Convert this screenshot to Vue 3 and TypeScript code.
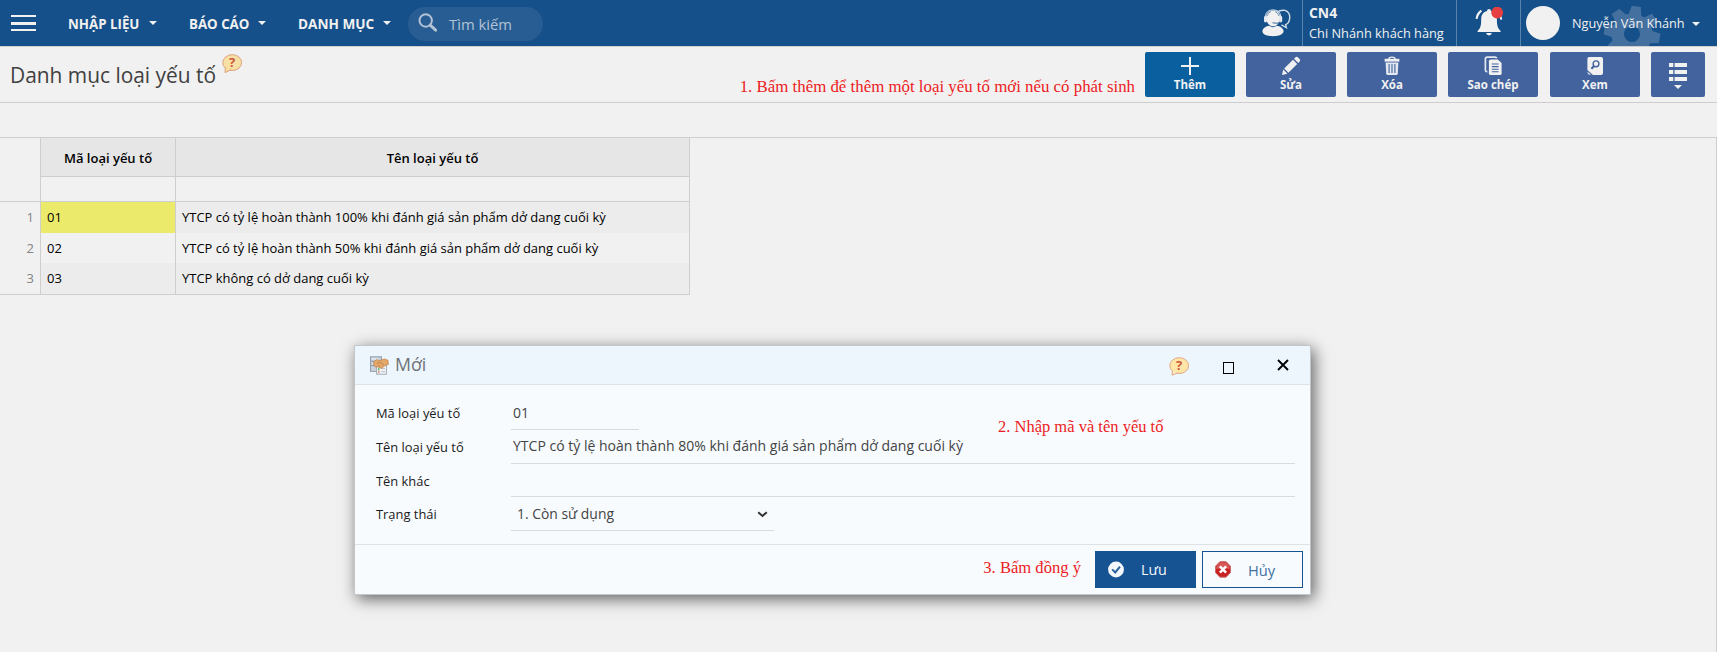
<script setup lang="ts">
interface Menu { label: string; cls: string }
interface Row { n: number; code: string; name: string }

const menus: Menu[] = [
  { label: 'NHẬP LIỆU', cls: 'menu-input' },
  { label: 'BÁO CÁO', cls: 'menu-report' },
  { label: 'DANH MỤC', cls: 'menu-list' },
]

const rows: Row[] = [
  { n: 1, code: '01', name: 'YTCP có tỷ lệ hoàn thành 100% khi đánh giá sản phẩm dở dang cuối kỳ' },
  { n: 2, code: '02', name: 'YTCP có tỷ lệ hoàn thành 50% khi đánh giá sản phẩm dở dang cuối kỳ' },
  { n: 3, code: '03', name: 'YTCP không có dở dang cuối kỳ' },
]

const gearTeeth = [0, 45, 90, 135, 180, 225, 270, 315]
</script>

<template>
  <div class="page">
    <header class="topbar">
      <div class="burger"><i></i><i></i><i></i></div>
      <nav class="menus">
        <div v-for="m in menus" :key="m.label" class="menu" :class="m.cls">
          <span>{{ m.label }}</span><i class="caret"></i>
        </div>
      </nav>
      <div class="search">
        <svg width="20" height="20" viewBox="0 0 20 20">
          <circle cx="7.7" cy="7.5" r="6.2" fill="none" stroke="#b3c3d5" stroke-width="2" />
          <path d="M12.2 12.2 L17.6 17.2" stroke="#b3c3d5" stroke-width="3" stroke-linecap="round" />
        </svg>
        <span>Tìm kiếm</span>
      </div>
      <div class="support">
        <svg width="30" height="30" viewBox="0 0 30 30">
          <path d="M15 3 Q19 .6 23 1.4 Q28 3 27.7 9 Q27.3 14.5 23.6 15.6 L24.4 18.6 L19.4 15.8" fill="none" stroke="#cfdbe7" stroke-width="1.4" />
          <path d="M4.2 9.5 C3.6 4 7 1.6 11 1.6 C15.2 1.6 18.6 4 18 9.5 C17.8 13.6 15 17.3 11 17.3 C7.2 17.3 4.6 13.6 4.2 9.5Z" fill="#f1f1f1" />
          <path d="M3.4 7.5 Q4 .9 11 .9 Q18.2 .9 18.8 7.5" fill="none" stroke="#dbe4ec" stroke-width="1" />
          <path d="M5.2 7 Q5.7 3.3 9 2.7 M16.8 7 Q16.3 3.3 13 2.7" fill="none" stroke="#5f86af" stroke-width=".8" />
          <rect x="2" y="7" width="3" height="6.4" rx="1.4" fill="#e4eaf0" /><rect x="17.2" y="7" width="3" height="6.4" rx="1.4" fill="#e4eaf0" />
          <path d="M18.6 13.2 Q15.5 15 10.5 13.8" fill="none" stroke="#44709f" stroke-width="1" />
          <path d="M.4 22.8 C.4 18.6 4.4 17.4 7.2 16.8 Q11 19.6 14.8 16.8 C17.8 17.4 21.6 18.6 21.6 22.8 C20.6 26 16 27.2 11 27.2 C6 27.2 1.2 26 .4 22.8Z" fill="#f1f1f1" />
        </svg>
      </div>
      <div class="branch"><b>CN4</b><span>Chi Nhánh khách hàng</span></div>
      <div class="bell">
        <svg width="32" height="32" viewBox="0 0 32 32">
          <path d="M2.6 11.8 Q3.4 6.4 7.4 3.6" fill="none" stroke="#f1f1f1" stroke-width="2.2" />
          <path d="M27.2 12.6 Q27 10.8 26.4 9.2" fill="none" stroke="#f1f1f1" stroke-width="2" />
          <circle cx="15" cy="3.8" r="1.9" fill="#f1f1f1" />
          <path d="M15 3.8 C9.8 4.2 7.2 7.4 7.2 12 C7.2 17.8 6.8 21 3.6 24 V25 H26.6 V24 C23.4 21 22.9 17.8 22.9 12 C22.9 7.4 20.2 4.2 15 3.8Z" fill="#f1f1f1" />
          <path d="M12 26 H18 Q17.2 28.4 15 28.4 Q12.8 28.4 12 26Z" fill="#f1f1f1" />
          <circle cx="23.2" cy="5.6" r="5.9" fill="#e53f42" />
        </svg>
      </div>
      <div class="user">
        <svg class="gear" width="60" height="60" viewBox="-30 -30 60 60">
          <g fill="#44709f" transform="rotate(9)">
            <path fill-rule="evenodd" d="M0 -20.5 A20.5 20.5 0 1 1 0 20.5 A20.5 20.5 0 1 1 0 -20.5Z M0 -8 A8 8 0 1 0 0 8 A8 8 0 1 0 0 -8Z" />
            <path v-for="a in gearTeeth" :key="a" d="M-6.4 -19 L-4.6 -28 H4.6 L6.4 -19Z" :transform="`rotate(${a})`" />
          </g>
        </svg>
        <i class="avatar"></i>
        <span class="name">Nguyễn Văn Khánh</span><i class="caret"></i>
      </div>
    </header>

    <section class="toolbar">
      <h1>Danh mục loại yếu tố</h1>
      <svg class="help-title" width="21" height="20" viewBox="0 0 21 20">
        <ellipse cx="10.2" cy="8.6" rx="9.4" ry="7.9" fill="#f6e0a4" stroke="#dda07c" />
        <path d="M3.4 13.6 L3 18.6 L8.8 15.9" fill="#f6e0a4" stroke="#dda07c" />
        <text x="10.2" y="13" class="q">?</text>
      </svg>
      <span class="note note-add">1. Bấm thêm để thêm một loại yếu tố mới nếu có phát sinh</span>
      <div class="actions">
        <div class="btn primary">
          <svg width="20" height="20" viewBox="0 0 20 20"><path d="M10 1 V19 M1 10 H19" stroke="#f1f1f1" stroke-width="2" /></svg>
          <span>Thêm</span>
        </div>
        <div class="btn">
          <svg width="20" height="20" viewBox="0 0 20 20"><g fill="#f1f1f1"><path d="M1 19 L2.2 13.6 L6.4 17.8Z" /><path d="M3.2 12.6 L12 3.8 L16.2 8 L7.4 16.8Z" /><path d="M13 2.8 L14.8 1 Q16 .4 17 1.4 L18.6 3 Q19.6 4 18.9 5.2 L17.2 7Z" /></g></svg>
          <span>Sửa</span>
        </div>
        <div class="btn">
          <svg width="20" height="20" viewBox="0 0 20 20">
            <path d="M6.8 3 Q7.2 1.2 10 1.2 Q12.8 1.2 13.2 3" fill="none" stroke="#f1f1f1" stroke-width="1.3" />
            <path d="M2.6 2.8 H17.4 V5.6 H2.6Z" fill="#f1f1f1" /><path d="M3.6 6.4 H16.4 L15.8 17.4 Q15.7 19 14.2 19 H5.8 Q4.3 19 4.2 17.4Z" fill="#e3e8f0" />
            <path d="M7.1 8 V17 M10 8 V17 M12.9 8 V17" stroke="#42639d" stroke-width="1.1" />
          </svg>
          <span>Xóa</span>
        </div>
        <div class="btn">
          <svg width="20" height="20" viewBox="0 0 20 20">
            <path d="M4.4 15.6 H3.6 Q2.4 15.6 2.4 14 V3 Q2.4 1.2 4.2 1.2 H12 Q13.4 1.2 13.8 2.2" fill="none" stroke="#e3e8f0" stroke-width="1.7" />
            <path d="M7.6 3.6 H14.8 L18.6 7 V17.4 Q18.6 19 17 19 H7.6 Q5.9 19 5.9 17.4 V5.2 Q5.9 3.6 7.6 3.6Z" fill="#f1f1f1" />
            <path d="M8.8 8 H15.6 M8.8 10.6 H15.6 M8.8 13.2 H15.6 M8.8 15.8 H15.6" stroke="#42639d" stroke-width="1.1" />
          </svg>
          <span>Sao chép</span>
        </div>
        <div class="btn view">
          <svg width="20" height="20" viewBox="0 0 20 20">
            <path d="M4 1 H16 Q18 1 18 3 V17 Q18 19 16 19 H8 L2.4 14 V3 Q2.4 1 4 1Z" fill="#f1f1f1" /><path d="M2.4 15.4 L6.2 18.8 H4 Q2.4 18.4 2.4 15.4Z" fill="#c9d3e3" />
            <circle cx="11" cy="7.8" r="2.9" fill="none" stroke="#42639d" stroke-width="1.4" /><path d="M9 10 L6.4 12.8" stroke="#42639d" stroke-width="2" />
          </svg>
          <span>Xem</span>
        </div>
        <div class="btn more">
          <svg width="18" height="18" viewBox="0 0 18 18"><path d="M0 0 H4.3 V4 H0Z M5.6 0 H18 V4 H5.6Z M0 7 H4.3 V11 H0Z M5.6 7 H18 V11 H5.6Z M0 14 H4.3 V18 H0Z M5.6 14 H18 V18 H5.6Z" fill="#f1f1f1" /></svg>
          <i class="caret"></i>
        </div>
      </div>
    </section>

    <main class="grid-area">
      <div class="grid">
        <div class="corner"></div>
        <div class="head">Mã loại yếu tố</div>
        <div class="head">Tên loại yếu tố</div>
        <div class="filter first"></div><div class="filter"></div><div class="filter"></div>
        <template v-for="r in rows" :key="r.n">
          <div class="num" :class="'line' + r.n">{{ r.n }}</div>
          <div class="cell" :class="['line' + r.n, { odd: r.n % 2 === 1, picked: r.n === 1 }]">{{ r.code }}</div>
          <div class="cell" :class="['line' + r.n, { odd: r.n % 2 === 1 }]">{{ r.name }}</div>
        </template>
      </div>
    </main>

    <section class="dialog">
      <div class="dialog-head">
        <svg class="doc" width="19" height="19" viewBox="0 0 19 19">
          <rect x=".5" y=".8" width="11" height="14.6" fill="#c9d1dd" stroke="#939fb0" />
          <path d="M1 5.2 H11 M1 9.6 H11" stroke="#8d9aab" /><path d="M2 3 H8 M2 7.4 H6" stroke="#f4f6f9" />
          <rect x="6.6" y="8.8" width="9.8" height="9.4" fill="#f2f3f4" stroke="#a2abb5" />
          <path d="M8.8 12 V14.4" stroke="#58b064" stroke-width="1.3" /><path d="M8.8 15.2 V17" stroke="#d9705c" stroke-width="1.3" /><path d="M11 12.6 H15 M11 15.6 H15" stroke="#b9c2cc" />
          <path d="M3 6.8 L6.4 3.6 L9.4 4.6 L14.6 3 L18 4.2 L18.4 8.4 L15 9.6 L11.6 12.4 L8.4 11 L5 10.8Z" fill="#e3a76a" stroke="#c58345" stroke-width=".7" />
          <path d="M7 7.4 L10 6.2 L14 9.4 M8 9.4 L10.6 11" stroke="#b97a42" stroke-width=".8" fill="none" />
        </svg>
        <h2>Mới</h2>
        <svg class="help" width="21" height="20" viewBox="0 0 21 20">
          <ellipse cx="10.2" cy="8.6" rx="9.4" ry="7.9" fill="#fee6a6" stroke="#e2a788" />
          <path d="M3.4 13.6 L3 18.2 L8.8 15.9" fill="#fff0c4" stroke="#e2a788" />
          <text x="10.2" y="12.6" class="q">?</text>
        </svg>
        <i class="maximize"></i>
        <svg class="close" width="12" height="12" viewBox="0 0 12 12"><path d="M1 1 L11 11 M11 1 L1 11" stroke="#000" stroke-width="1.9" /></svg>
      </div>
      <div class="form">
        <label>Mã loại yếu tố</label><div class="field short">01</div>
        <label>Tên loại yếu tố</label><div class="field long">YTCP có tỷ lệ hoàn thành 80% khi đánh giá sản phẩm dở dang cuối kỳ</div>
        <label>Tên khác</label><div class="field"></div>
        <label>Trạng thái</label>
        <div class="field select"><span>1. Còn sử dụng</span>
          <svg width="11" height="7" viewBox="0 0 11 7"><path d="M1.2 1.2 L5.5 5 L9.8 1.2" fill="none" stroke="#333" stroke-width="2" /></svg>
        </div>
      </div>
      <span class="note note-fill">2. Nhập mã và tên yếu tố</span>
      <div class="dialog-foot">
        <span class="note note-ok">3. Bấm đồng ý</span>
        <div class="save">
          <svg width="16" height="17" viewBox="0 0 16 17"><circle cx="8" cy="8.5" r="7.9" fill="#f4f8fc" /><path d="M4.2 8.4 L7.2 11.4 L12 5.6" fill="none" stroke="#2a619b" stroke-width="2" /></svg>
          <span>Lưu</span>
        </div>
        <div class="cancel">
          <svg width="16" height="17" viewBox="0 0 16 17"><path d="M4.9 .7 H11.1 L15.5 5.2 V11.6 L11.1 16.2 H4.9 L.5 11.6 V5.2Z" fill="#c9211f" stroke="#c76d6b" /><path d="M1.4 5.4 L5.2 1.6 H10.8 L14.6 5.4 V8 Q8 6.4 1.4 8Z" fill="#d85a58" /><path d="M4.9 5.3 L11.1 11.7 M11.1 5.3 L4.9 11.7" stroke="#fff" stroke-width="2.5" /></svg>
          <span>Hủy</span>
        </div>
      </div>
    </section>
  </div>
</template>

<style>
body { margin: 0; background: #f1f1f1; }
</style>

<style scoped>
* { box-sizing: border-box; }
.page { position: relative; display: flex; flex-direction: column; width: 100%; height: 652px; overflow: hidden; background: #f1f1f1; font-family: "Open Sans", "Noto Sans", sans-serif; white-space: nowrap; }
svg { display: block; flex: none; }
h1, h2 { margin: 0; font-weight: 400; }
.caret { flex: none; width: 0; height: 0; border: 4px solid transparent; border-top-color: #f1f1f1; border-bottom: 0; }

.topbar { display: flex; height: 46px; flex: none; background: #15508a; color: #f1f1f1; overflow: hidden; }
.burger { width: 25px; height: 16px; margin: 15px 0 0 11px; display: flex; flex-direction: column; justify-content: space-between; }
.burger i { height: 2px; background: #f1f1f1; }
.burger i:nth-child(2) { height: 3px; }
.menus { display: flex; margin-left: 32px; }
.menu { display: flex; align-items: center; font-weight: 700; font-size: 13.3px; line-height: 46px; padding-top: 2px; }
.menu .caret { margin: -3px 0 0 auto; }
.menu-input { width: 89px; }
.menu-report { width: 77px; margin-left: 32px; }
.menu-list { width: 93px; margin-left: 32px; font-size: 13.6px; }
.search { display: flex; align-items: center; width: 135px; height: 34px; margin: 7px 0 0 17px; padding-left: 10px; border-radius: 17px; background: #285d94; color: #b3c3d5; font-size: 14.8px; }
.search svg { margin-top: -2px; }
.search span { margin-left: 11px; margin-top: -1px; }
.support { margin-left: auto; width: 41px; padding-top: 8.5px; border-right: 1px solid #5b84ad; }
.branch { display: flex; flex-direction: column; width: 154px; padding-left: 6px; border-right: 1px solid #5b84ad; font-size: 12.8px; }
.branch b { font-size: 13.9px; line-height: 25px; height: 23px; }
.branch span { line-height: 20px; }
.bell { width: 64px; padding: 7px 0 0 17px; border-right: 1px solid #5b84ad; }
.user { position: relative; display: flex; align-items: center; width: 196px; padding-left: 5px; }
.avatar { width: 34px; height: 34px; border-radius: 50%; background: #f1f1f1; margin-top: -1px; position: relative; }
.name { margin-left: 12px; margin-top: -1px; font-size: 12.7px; position: relative; }
.user .caret { margin: 2px 17px 0 auto; position: relative; }
.gear { position: absolute; left: 81px; top: 4px; }

.toolbar { display: flex; height: 57px; flex: none; border-top: 1px solid #cecece; border-bottom: 1px solid #cecece; padding-right: 12px; }
h1 { width: 211px; padding-left: 10px; font-size: 20.9px; line-height: 56px; color: #404040; }
.help-title { margin: 7px 0 0 11px; }
.q { font: 700 13px "Noto Sans", sans-serif; fill: #cf5740; text-anchor: middle; }
.note { color: #ed1c24; font-family: "Liberation Serif", "Times New Roman", serif; font-size: 16.85px; }
.note-add { margin-left: auto; line-height: 22px; padding-top: 29px; }
.actions { display: flex; gap: 11px; margin: 5px 0 0 10px; }
.btn { display: flex; flex-direction: column; align-items: center; width: 90px; height: 45px; padding-top: 4px; border-radius: 2px; background: #42639d; color: #f1f1f1; font-size: 11.5px; font-weight: 700; line-height: 20px; }
.btn span { margin-top: -1px; }
.btn.primary { background: #0a5f9f; }
.btn.view { margin-left: 1px; }
.btn.more { width: 54px; padding-top: 11px; }
.more .caret { margin-top: 4px; }

.grid-area { flex: 1; margin-top: 34px; border-top: 1px solid #cecece; border-right: 1px solid #cecece; }
.grid { display: grid; grid-template-columns: 41px 135px 514px; width: 690px; color: #000; font-size: 12.97px; }
.grid > div { border-right: 1px solid #cecece; }
.head { height: 39px; line-height: 40px; text-align: center; background: #e6e6e6; border-bottom: 1px solid #cecece; font-weight: 600; font-size: 13px; }
.filter { height: 25px; border-bottom: 1px solid #cecece; }
.cell { padding-left: 6px; line-height: 31px; }
.num { padding-right: 6px; text-align: right; color: #848484; line-height: 31px; }
.line1 { height: 31px; }
.line2 { height: 30px; line-height: 30px; }
.line3 { height: 32px; line-height: 31px; border-bottom: 1px solid #cecece; }
.odd { background: #ececec; }
.picked { background: #ebea6b; }

.dialog { position: absolute; left: 354px; top: 345px; width: 957px; height: 250px; border: 1px solid #c4c6c8; background: #f7fbfe; box-shadow: 3px 4px 15px rgba(0, 0, 0, .6); }
.dialog-head { display: flex; align-items: flex-start; height: 39px; border-bottom: 1px solid #dfe2e4; background: #edf6fd; }
.doc { margin: 10px 0 0 15px; }
h2 { margin-left: 6px; font-size: 17.8px; line-height: 37px; color: #707376; }
.help { margin: 10.5px 0 0 auto; }
.maximize { width: 11px; height: 12px; margin: 16px 0 0 33px; border: 1px solid #000; }
.close { margin: 13px 21px 0 43px; }
.form { display: grid; grid-template-columns: 135px 784px; grid-template-rows: 34px 34px 33px 34px; padding: 11px 0 13px 21px; height: 160px; border-bottom: 1px solid #dfe2e4; }
label { padding-top: 1px; font-size: 12.9px; line-height: 33px; color: #1a1a1a; }
.field { border-bottom: 1px solid #d8dbdd; padding: 0 0 0 2px; font-size: 14.03px; line-height: 33px; color: #444; height: 100%; }
.field.short { width: 128px; }
.field.long { line-height: 32px; }
.field.select { display: flex; width: 263px; padding-left: 6px; font-size: 13.9px; }
.select svg { margin: 14px 6px 0 auto; }
.note-fill { position: absolute; left: 643px; top: 70px; line-height: 22px; font-size: 16.5px; }
.dialog-foot { display: flex; justify-content: flex-end; padding: 6px 7px 0 0; }
.note-ok { line-height: 34px; margin-right: 14px; font-size: 16.6px; }
.save, .cancel { display: flex; align-items: center; width: 101px; height: 37px; padding-left: 12px; border: 1px solid #165392; font-size: 14.3px; }
.save { background: #165392; color: #f4f8fc; }
.cancel { margin-left: 6px; color: #41719f; font-size: 14.7px; }
.save span, .cancel span { margin-left: 17px; }
</style>
